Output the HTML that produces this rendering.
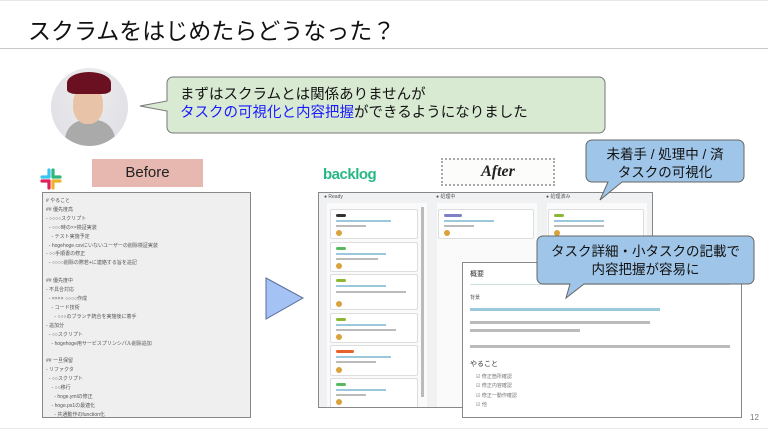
<!DOCTYPE html><html><head><meta charset="utf-8"><style>
body{margin:0;width:768px;height:433px;position:relative;overflow:hidden;background:#fff;font-family:"Liberation Sans","Noto Sans CJK JP",sans-serif}
.a{position:absolute}
.sm{font-size:5px;color:#555;line-height:8.9px;white-space:pre}
.card{position:absolute;background:#fff;border:1px solid #ddd;border-radius:2px;width:86px}
.tag{position:absolute;left:5px;top:4px;width:10px;height:3px;border-radius:2px}
.ln{position:absolute;left:5px;height:2px;background:#bbb}
.av{position:absolute;left:5px;width:6px;height:6px;border-radius:50%;background:#d9a23c}
</style></head><body>
<div class="a" style="left:0;top:0;width:768px;height:1px;background:#e8e8e8"></div>
<div class="a" style="left:28px;top:12px;font-size:23px;color:#111">スクラムをはじめたらどうなった？</div>
<div class="a" style="left:0;top:48px;width:768px;height:1px;background:#c8c8c8"></div>
<div class="a" style="left:0;top:428px;width:768px;height:1px;background:#e8e8e8"></div>
<div class="a" style="left:51px;top:68px;width:77px;height:78px;border-radius:50%;background:radial-gradient(ellipse at 50% 30%,#eee,#dcdce4);overflow:hidden">
 <div class="a" style="left:14px;top:52px;width:50px;height:30px;background:#aaa;border-radius:20px 20px 0 0"></div>
 <div class="a" style="left:22px;top:18px;width:30px;height:38px;background:#e9c3a8;border-radius:45%"></div>
 <div class="a" style="left:16px;top:4px;width:44px;height:22px;background:#6b1020;border-radius:50% 50% 20% 20%"></div>
</div>
<svg class="a" style="left:135px;top:72px" width="480" height="66"><path d="M38 5 h426 a6 6 0 0 1 6 6 v44 a6 6 0 0 1 -6 6 h-426 a6 6 0 0 1 -6 -6 v-16 L5 34 L32 29 v-18 a6 6 0 0 1 6 -6z" fill="#d9ead3" stroke="#777" stroke-width="1"/></svg>
<div class="a" style="left:180px;top:86px;font-size:14.5px;line-height:18px;color:#111">まずはスクラムとは関係ありませんが<br><span style="color:#1a1aff">タスクの可視化と内容把握</span>ができるようになりました</div>
<div class="a" style="left:92px;top:159px;width:111px;height:28px;background:#e6b8af;text-align:center;font-size:15px;line-height:28px;color:#222">Before</div>
<svg class="a" style="left:40px;top:168px" width="22" height="22"><g stroke-width="3.2" stroke-linecap="round"><path d="M9 2v7" stroke="#36c5f0"/><path d="M2 9h7" stroke="#36c5f0"/><path d="M13 2v7" stroke="#2eb67d"/><path d="M13 9h7" stroke="#2eb67d"/><path d="M13 13v7" stroke="#ecb22e"/><path d="M13 13h7" stroke="#ecb22e"/><path d="M9 13v7" stroke="#e01e5a"/><path d="M2 13h7" stroke="#e01e5a"/></g></svg>
<div class="a" style="left:42px;top:192px;width:207px;height:224px;background:#efefef;border:1px solid #888;overflow:hidden">
<div class="sm" style="padding:4px 0 0 3px"># やること
## 優先度高
- ○○○○スクリプト
  - ○○○時の××検証実装
    - テスト実施予定
  - hogehoge.csvにいないユーザーの削除検証実装
- ○○手順書の修正
  - ○○○○削除の際若+に連絡する旨を追記

## 優先度中
- 不具合対応
  - ×××× ○○○○作成
    - コード技術
      - ○○○のブランチ統合を実施後に着手
- 追加分
  - ○○スクリプト
    - hogehoge用サービスプリンシパル削除追加

## 一旦保留
- リファクタ
  - ○○スクリプト
    - ○○移行
      - hoge.ymlの修正
    - hoge.ps1の最適化
      - 共通動作のfunction化
      - ○○対応</div></div>
<svg class="a" style="left:265px;top:277px" width="40" height="44"><path d="M1 1 L38 21 L1 42z" fill="#a4c2f4" stroke="#5a6f99"/></svg>
<div class="a" style="left:323px;top:166px;font-size:15px;font-weight:bold;color:#27b884;letter-spacing:-.5px">backlog</div>
<div class="a" style="left:441px;top:158px;width:114px;height:28px;border:2px dotted #aaa;box-sizing:border-box;background:#fcfcfa;text-align:center;font:italic bold 16px/24px 'Liberation Serif',serif;color:#222">After</div>
<div class="a" style="left:318px;top:192px;width:333px;height:214px;background:#f0f1f2;border:1px solid #888;overflow:hidden">
 <div class="sm" style="position:absolute;left:5px;top:0px">● Ready</div>
 <div class="sm" style="position:absolute;left:117px;top:0px">● 処理中</div>
 <div class="sm" style="position:absolute;left:227px;top:0px">● 処理済み</div>
 <div class="a" style="left:8px;top:10px;width:100px;height:204px;background:#fafafa"></div>
 <div class="a" style="left:118px;top:10px;width:100px;height:204px;background:#fafafa"></div>
 <div class="a" style="left:228px;top:10px;width:100px;height:204px;background:#fafafa"></div>
 <div class="a" style="left:102px;top:14px;width:3px;height:190px;background:#bbb"></div>
 <div class="card" style="left:11px;top:16px;height:28px"><div class="tag" style="background:#333"></div><div class="ln" style="top:10px;width:55px;background:#9cc8dc"></div><div class="ln" style="top:15px;width:30px"></div><div class="av" style="top:20px"></div></div>
 <div class="card" style="left:11px;top:49px;height:28px"><div class="tag" style="background:#5cb85c"></div><div class="ln" style="top:10px;width:50px;background:#9cc8dc"></div><div class="ln" style="top:15px;width:42px"></div><div class="av" style="top:20px"></div></div>
 <div class="card" style="left:11px;top:81px;height:34px"><div class="tag" style="background:#8bb832"></div><div class="ln" style="top:10px;width:50px;background:#9cc8dc"></div><div class="ln" style="top:16px;width:70px"></div><div class="av" style="top:26px"></div></div>
 <div class="card" style="left:11px;top:120px;height:28px"><div class="tag" style="background:#8bb832"></div><div class="ln" style="top:10px;width:50px;background:#9cc8dc"></div><div class="ln" style="top:15px;width:60px"></div><div class="av" style="top:20px"></div></div>
 <div class="card" style="left:11px;top:152px;height:29px"><div class="tag" style="background:#e8602c;width:18px"></div><div class="ln" style="top:10px;width:55px;background:#9cc8dc"></div><div class="ln" style="top:15px;width:40px"></div><div class="av" style="top:21px"></div></div>
 <div class="card" style="left:11px;top:185px;height:28px"><div class="tag" style="background:#5cb85c"></div><div class="ln" style="top:10px;width:50px;background:#9cc8dc"></div><div class="ln" style="top:15px;width:30px"></div><div class="av" style="top:20px"></div></div>
 <div class="card" style="left:119px;top:16px;height:28px;width:94px"><div class="tag" style="background:#7e7fc6;width:18px"></div><div class="ln" style="top:10px;width:50px;background:#9cc8dc"></div><div class="ln" style="top:15px;width:30px"></div><div class="av" style="top:20px"></div></div>
 <div class="card" style="left:229px;top:16px;height:28px;width:94px"><div class="tag" style="background:#8bb832"></div><div class="ln" style="top:10px;width:50px;background:#9cc8dc"></div><div class="ln" style="top:15px;width:50px"></div><div class="av" style="top:20px"></div></div>
</div>
<div class="a" style="left:462px;top:262px;width:278px;height:154px;background:#fff;border:1px solid #888">
 <div class="a" style="left:7px;top:6px;font-size:7px;color:#333">概要</div>
 <div class="a" style="left:7px;top:21px;width:260px;height:1px;background:#cde4dc"></div>
 <div class="a" style="left:7px;top:31px;font-size:5px;color:#555">背景</div>
 <div class="a" style="left:7px;top:45px;width:190px;height:3px;background:#9cc8dc"></div>
 <div class="a" style="left:7px;top:58px;width:180px;height:3px;background:#bbb"></div>
 <div class="a" style="left:7px;top:66px;width:110px;height:3px;background:#bbb"></div>
 <div class="a" style="left:7px;top:82px;width:260px;height:3px;background:#bbb"></div>
 <div class="a" style="left:7px;top:96px;font-size:7px;color:#333">やること</div>
 <div class="a sm" style="left:13px;top:110px;line-height:9.3px;color:#777">☑ 修正箇所確認
☑ 修正内容確認
☑ 修正一動作確認
☑ 他</div>
</div>
<svg class="a" style="left:580px;top:136px" width="168" height="70"><path d="M12 4 h146 a6 6 0 0 1 6 6 v30 a6 6 0 0 1 -6 6 h-116 L20 64 L28 46 h-16 a6 6 0 0 1 -6 -6 v-30 a6 6 0 0 1 6 -6z" fill="#9fc5e8" stroke="#666"/></svg>
<div class="a" style="left:586px;top:146px;width:158px;text-align:center;font-size:13.5px;line-height:18px;color:#111">未着手 / 処理中 / 済<br>タスクの可視化</div>
<svg class="a" style="left:530px;top:232px" width="230" height="72"><path d="M13 4 h205 a6 6 0 0 1 6 6 v36 a6 6 0 0 1 -6 6 h-164 L36 66 L40 52 h-27 a6 6 0 0 1 -6 -6 v-36 a6 6 0 0 1 6 -6z" fill="#9fc5e8" stroke="#666"/></svg>
<div class="a" style="left:537px;top:243px;width:217px;text-align:center;font-size:13.5px;line-height:18px;color:#111">タスク詳細・小タスクの記載で<br>内容把握が容易に</div>
<div class="a" style="left:750px;top:413px;font-size:8px;color:#777">12</div>
</body></html>
